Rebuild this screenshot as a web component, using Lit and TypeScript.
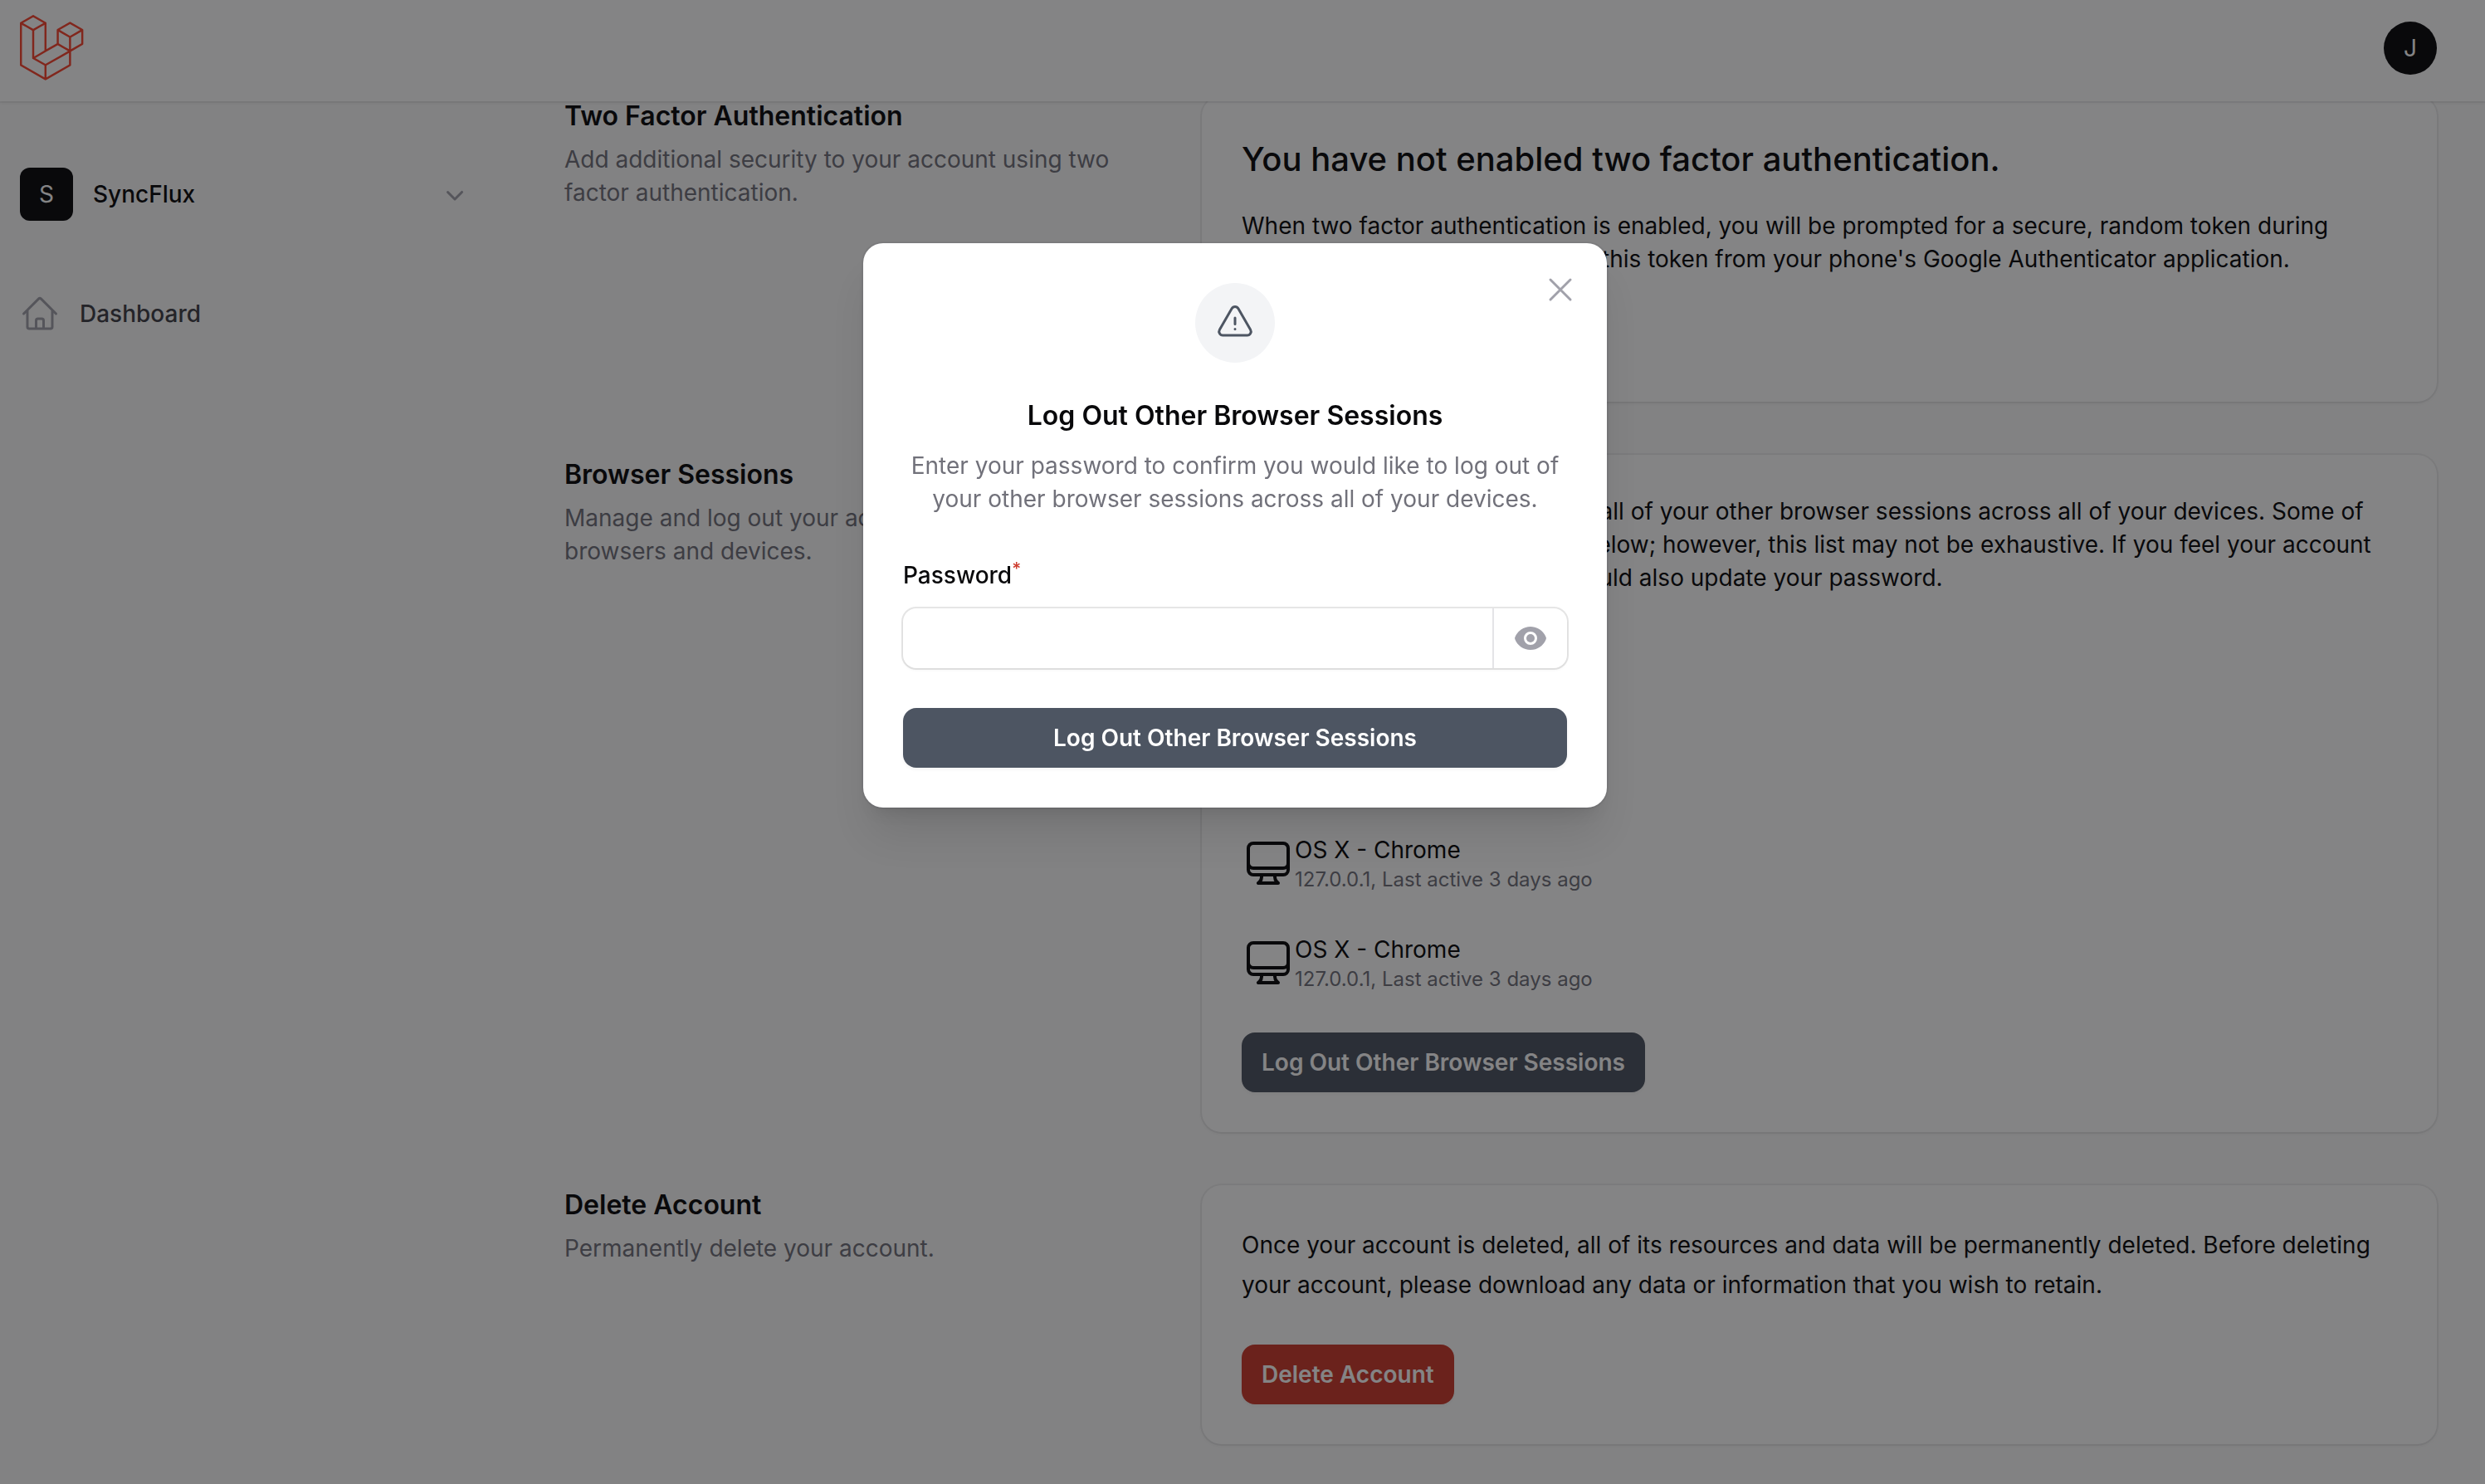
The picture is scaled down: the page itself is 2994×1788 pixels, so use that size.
import { LitElement, html, css, svg } from "lit";
import { customElement, property, state } from "lit/decorators.js";

interface Session {
  platform: string;
  detail: string;
}

const outlineIcons: Record<string, string> = {
  home: "m2.25 12 8.954-8.955c.44-.439 1.152-.439 1.591 0L21.75 12M4.5 9.75v10.125c0 .621.504 1.125 1.125 1.125H9.75v-4.875c0-.621.504-1.125 1.125-1.125h2.25c.621 0 1.125.504 1.125 1.125V21h4.125c.621 0 1.125-.504 1.125-1.125V9.75M8.25 21h8.25",
  desktop:
    "M9 17.25v1.007a3 3 0 0 1-.879 2.122L7.5 21h9l-.621-.621A3 3 0 0 1 15 18.257V17.25m6-12V15a2.25 2.25 0 0 1-2.25 2.25H5.25A2.25 2.25 0 0 1 3 15V5.25m18 0A2.25 2.25 0 0 0 18.75 3H5.25A2.25 2.25 0 0 0 3 5.25m18 0V12a2.25 2.25 0 0 1-2.25 2.25H5.25A2.25 2.25 0 0 1 3 12V5.25",
  warning:
    "M12 9v3.75m-9.303 3.376c-.866 1.5.217 3.374 1.948 3.374h14.71c1.73 0 2.813-1.874 1.948-3.374L13.949 3.378c-.866-1.5-3.032-1.5-3.898 0L2.697 16.126ZM12 15.75h.007v.008H12v-.008Z",
  close: "M6 18 18 6M6 6l12 12",
};

const solidIcons: Record<string, string[]> = {
  chevron: [
    "M5.22 8.22a.75.75 0 0 1 1.06 0L10 11.94l3.72-3.72a.75.75 0 1 1 1.06 1.06l-4.25 4.25a.75.75 0 0 1-1.06 0L5.22 9.28a.75.75 0 0 1 0-1.06Z",
  ],
  eye: [
    "M10 12.5a2.5 2.5 0 1 0 0-5 2.5 2.5 0 0 0 0 5Z",
    "M.664 10.59a1.651 1.651 0 0 1 0-1.186A10.004 10.004 0 0 1 10 3c4.257 0 7.893 2.66 9.336 6.41.147.381.146.804 0 1.186A10.004 10.004 0 0 1 10 17c-4.257 0-7.893-2.66-9.336-6.41ZM14 10a4 4 0 1 1-8 0 4 4 0 0 1 8 0Z",
  ],
};

@customElement("ui-icon")
export class UiIcon extends LitElement {
  static styles = css`
    :host {
      display: block;
      flex: none;
      width: 48px;
      height: 48px;
    }
    .icon {
      display: block;
      width: 100%;
      height: 100%;
    }
  `;

  @property() name = "";

  render() {
    const solid = solidIcons[this.name];
    if (solid) {
      return html`<svg class="icon" viewBox="0 0 20 20" fill="currentColor" aria-hidden="true">
        ${solid.map((d) => svg`<path fill-rule="evenodd" clip-rule="evenodd" d=${d} />`)}
      </svg>`;
    }
    return html`<svg
      class="icon"
      viewBox="0 0 24 24"
      fill="none"
      stroke="currentColor"
      stroke-width="1.5"
      stroke-linecap="round"
      stroke-linejoin="round"
      aria-hidden="true"
    >
      <path d=${outlineIcons[this.name] ?? ""} />
    </svg>`;
  }
}

@customElement("settings-section")
export class SettingsSection extends LitElement {
  static styles = css`
    :host {
      display: grid;
      grid-template-columns: repeat(3, minmax(0, 1fr));
      column-gap: 48px;
    }
    .intro {
      display: flex;
      flex-direction: column;
      gap: 8px;
    }
    .heading {
      margin: 0;
      font-size: 32px;
      line-height: 48px;
      font-weight: 600;
      color: #09090b;
    }
    .description {
      margin: 0;
      font-size: 28px;
      line-height: 40px;
      color: #71717a;
    }
    .card {
      grid-column: span 2;
      box-sizing: border-box;
      padding: 48px;
      border-radius: 24px;
      background: #fff;
      box-shadow:
        0 0 0 2px rgba(9, 9, 11, 0.05),
        0 2px 4px rgba(0, 0, 0, 0.05);
    }
  `;

  @property() heading = "";
  @property() description = "";

  render() {
    return html`
      <div class="intro">
        <h2 class="heading">${this.heading}</h2>
        <p class="description">${this.description}</p>
      </div>
      <div class="card"><slot></slot></div>
    `;
  }
}

@customElement("app-root")
export class AppRoot extends LitElement {
  static styles = css`
    :host {
      display: block;
      font-family: Inter, "Liberation Sans", sans-serif;
      font-size: 28px;
      line-height: 40px;
      color: #09090b;
    }
    button,
    input {
      font: inherit;
      color: inherit;
      margin: 0;
      padding: 0;
      border: 0;
      background: none;
    }
    button {
      cursor: pointer;
    }
    .page {
      display: flex;
      flex-direction: column;
      box-sizing: border-box;
      min-height: 100vh;
      background: #fafafa;
    }

    .topbar {
      position: sticky;
      top: 0;
      z-index: 1;
      display: flex;
      align-items: center;
      justify-content: space-between;
      padding: 18px 58px 24px 24px;
      background: #fff;
      box-shadow:
        0 0 0 2px rgba(9, 9, 11, 0.05),
        0 2px 4px rgba(0, 0, 0, 0.05);
    }
    .logo {
      display: block;
      height: 80px;
      width: auto;
    }
    .avatar {
      display: grid;
      place-items: center;
      flex: none;
      width: 64px;
      height: 64px;
      font-weight: 400;
      background: #09090b;
      color: #fff;
    }
    .avatar.round {
      border-radius: 50%;
    }
    .avatar.square {
      border-radius: 12px;
    }

    .body {
      display: grid;
      grid-template-columns: 616px minmax(0, 1fr);
    }
    .sidebar {
      display: flex;
      flex-direction: column;
      gap: 72px;
      padding: 80px 48px 48px 24px;
      font-weight: 500;
    }
    .tenant {
      display: flex;
      align-items: center;
      gap: 24px;
      text-align: left;
      font-weight: 500;
    }
    .tenant-name {
      flex: 1;
    }
    .chevron {
      width: 40px;
      height: 40px;
      color: #a1a1aa;
    }
    .nav-link {
      display: flex;
      align-items: center;
      gap: 24px;
      padding: 16px 0;
      color: #3f3f46;
      text-decoration: none;
    }
    .nav-icon {
      color: #a1a1aa;
    }

    .content {
      display: flex;
      flex-direction: column;
      gap: 64px;
      margin-top: -6px;
      padding: 0 58px 48px 64px;
    }
    .stack {
      display: flex;
      flex-direction: column;
      align-items: flex-start;
    }
    .stack.tight {
      gap: 32px;
    }
    .stack.loose {
      gap: 48px;
    }
    .title {
      margin: 0;
      font-size: 40px;
      line-height: 56px;
      font-weight: 500;
    }
    .text {
      margin: 0;
    }
    .text.airy {
      line-height: 48px;
    }
    .sessions {
      display: flex;
      flex-direction: column;
      gap: 48px;
      margin: 0;
      padding: 0;
      list-style: none;
    }
    .session {
      display: flex;
      align-items: center;
    }
    .device {
      width: 64px;
      height: 64px;
    }
    .session-detail {
      font-size: 24px;
      line-height: 32px;
      color: #71717a;
    }
    .btn {
      padding: 16px 24px;
      border-radius: 16px;
      font-weight: 600;
      color: #fff;
      background: #4d5562;
      box-shadow: 0 2px 4px rgba(0, 0, 0, 0.05);
    }
    .btn.danger {
      background: #cd3b2d;
    }

    .overlay {
      position: fixed;
      inset: 0;
      z-index: 2;
      display: grid;
      grid-template-rows: 1fr auto 3fr;
      justify-items: center;
      box-sizing: border-box;
      padding: 32px 18px 32px 0;
      background: rgba(9, 9, 11, 0.5);
    }
    .modal {
      grid-row: 2;
      position: relative;
      display: flex;
      flex-direction: column;
      gap: 48px;
      box-sizing: border-box;
      width: 100%;
      max-width: 896px;
      padding: 48px;
      border-radius: 24px;
      background: #fff;
      box-shadow:
        0 0 0 2px rgba(9, 9, 11, 0.05),
        0 40px 50px -10px rgba(0, 0, 0, 0.1),
        0 16px 20px -12px rgba(0, 0, 0, 0.1);
    }
    .close {
      position: absolute;
      top: 32px;
      right: 32px;
      color: #a1a1aa;
    }
    .modal-head {
      display: flex;
      flex-direction: column;
      align-items: center;
      text-align: center;
    }
    .badge {
      display: grid;
      place-items: center;
      width: 96px;
      height: 96px;
      margin-bottom: 40px;
      border-radius: 50%;
      background: #f3f4f6;
      color: #4d5562;
    }
    .modal-title {
      margin: 0 0 16px;
      font-size: 32px;
      line-height: 48px;
      font-weight: 600;
    }
    .muted {
      margin: 0;
      color: #71717a;
    }
    .field {
      display: flex;
      flex-direction: column;
      gap: 16px;
    }
    .label {
      line-height: 48px;
      font-weight: 500;
    }
    .required {
      font-size: 21px;
      line-height: 0;
      color: #cd3b2d;
    }
    .input-group {
      display: flex;
      height: 72px;
      border-radius: 16px;
      box-shadow:
        0 0 0 2px rgba(9, 9, 11, 0.1),
        0 2px 4px rgba(0, 0, 0, 0.05);
    }
    .input {
      flex: 1;
      min-width: 0;
      padding: 0 24px;
      border-radius: 16px 0 0 16px;
      outline: none;
    }
    .reveal {
      display: grid;
      place-items: center;
      padding: 0 24px;
      border-left: 2px solid #e4e4e7;
      color: #a1a1aa;
    }
    .eye {
      width: 40px;
      height: 40px;
    }
  `;

  @state() private open = true;
  @state() private revealed = false;

  private sessions: Session[] = [
    { platform: "OS X - Chrome", detail: "127.0.0.1, This device" },
    { platform: "OS X - Chrome", detail: "127.0.0.1, Last active 1 day ago" },
    { platform: "OS X - Chrome", detail: "127.0.0.1, Last active 3 days ago" },
    { platform: "OS X - Chrome", detail: "127.0.0.1, Last active 3 days ago" },
  ];

  private renderTopbar() {
    return html`
      <header class="topbar">
        <a href="#" aria-label="Home">
          <svg class="logo" viewBox="0 0 50 52" aria-hidden="true">
            <path
              fill="#f8452f"
              d="M49.626 11.564a.809.809 0 0 1 .028.209v10.972a.8.8 0 0 1-.402.694l-9.209 5.302V39.25c0 .286-.152.55-.4.694L20.42 51.01c-.044.025-.092.041-.14.058-.018.006-.035.017-.054.022a.805.805 0 0 1-.41 0c-.022-.006-.042-.018-.063-.026-.044-.016-.09-.03-.132-.054L.402 39.944A.801.801 0 0 1 0 39.25V6.334c0-.072.01-.142.028-.21.006-.023.02-.044.028-.067.015-.042.029-.085.051-.124.015-.026.037-.047.055-.071.023-.032.044-.065.071-.093.023-.023.053-.04.079-.06.029-.024.055-.05.088-.069h.001l9.61-5.533a.802.802 0 0 1 .8 0l9.61 5.533h.002c.032.02.059.045.088.068.026.02.055.038.078.06.028.029.048.062.072.094.017.024.04.045.054.071.023.04.036.082.052.124.008.023.022.044.028.068a.809.809 0 0 1 .028.209v20.559l8.008-4.611v-10.51c0-.07.01-.141.028-.208.007-.024.02-.045.028-.068.016-.042.03-.085.052-.124.015-.026.037-.047.054-.071.024-.032.044-.065.072-.093.023-.023.052-.04.078-.06.03-.024.056-.05.088-.069h.001l9.611-5.533a.801.801 0 0 1 .8 0l9.61 5.533c.034.02.06.045.09.068.025.02.054.038.077.06.028.029.048.062.072.094.018.024.04.045.054.071.023.039.036.082.052.124.009.023.022.044.028.068zm-1.574 10.718v-9.124l-3.363 1.936-4.646 2.675v9.124l8.01-4.611zm-9.61 16.505v-9.13l-4.57 2.61-13.05 7.448v9.216l17.62-10.144zM1.602 7.719v31.068L19.22 48.93v-9.214l-9.204-5.209-.003-.002-.004-.002c-.031-.018-.057-.044-.086-.066-.025-.02-.054-.036-.076-.058l-.002-.003c-.026-.025-.044-.056-.066-.084-.02-.027-.044-.05-.06-.078l-.001-.003c-.018-.03-.029-.066-.042-.1-.013-.03-.03-.058-.038-.09v-.001c-.01-.038-.012-.078-.016-.117-.004-.03-.012-.06-.012-.09v-.002-21.481L4.965 9.654 1.602 7.72zm8.81-5.994L2.405 6.334l8.005 4.609 8.006-4.61-8.006-4.608zm4.164 28.764l4.645-2.674V7.719l-3.363 1.936-4.646 2.675v20.096l3.364-1.937zM39.243 7.164l-8.006 4.609 8.006 4.609 8.005-4.61-8.005-4.608zm-.801 10.605l-4.646-2.675-3.363-1.936v9.124l4.645 2.674 3.364 1.937v-9.124zM20.02 38.33l11.743-6.704 5.87-3.35-8-4.606-9.211 5.303-8.395 4.833 7.993 4.524z"
            />
          </svg>
        </a>
        <button class="avatar round" type="button" aria-label="User menu">J</button>
      </header>
    `;
  }

  private renderSidebar() {
    return html`
      <nav class="sidebar">
        <button class="tenant" type="button">
          <span class="avatar square">S</span>
          <span class="tenant-name">SyncFlux</span>
          <ui-icon class="chevron" name="chevron"></ui-icon>
        </button>
        <a class="nav-link" href="#dashboard">
          <ui-icon class="nav-icon" name="home"></ui-icon>
          <span>Dashboard</span>
        </a>
      </nav>
    `;
  }

  private renderModal() {
    return html`
      <div class="overlay">
        <form
          class="modal"
          role="dialog"
          aria-modal="true"
          aria-labelledby="modal-title"
          @submit=${(e: Event) => e.preventDefault()}
        >
          <button class="close" type="button" aria-label="Close" @click=${() => (this.open = false)}>
            <ui-icon name="close"></ui-icon>
          </button>
          <div class="modal-head">
            <div class="badge"><ui-icon name="warning"></ui-icon></div>
            <h2 class="modal-title" id="modal-title">Log Out Other Browser Sessions</h2>
            <p class="muted">
              Enter your password to confirm you would like to log out of your other browser
              sessions across all of your devices.
            </p>
          </div>
          <div class="field">
            <label class="label" for="password">Password<sup class="required">*</sup></label>
            <div class="input-group">
              <input
                class="input"
                id="password"
                type=${this.revealed ? "text" : "password"}
                autocomplete="current-password"
                required
              />
              <button
                class="reveal"
                type="button"
                aria-label="Show password"
                @click=${() => (this.revealed = !this.revealed)}
              >
                <ui-icon class="eye" name="eye"></ui-icon>
              </button>
            </div>
          </div>
          <button class="btn" type="submit">Log Out Other Browser Sessions</button>
        </form>
      </div>
    `;
  }

  render() {
    return html`
      <div class="page">
        ${this.renderTopbar()}
        <div class="body">
          ${this.renderSidebar()}
          <main class="content">
            <settings-section
              heading="Two Factor Authentication"
              description="Add additional security to your account using two factor authentication."
            >
              <div class="stack tight">
                <h3 class="title">You have not enabled two factor authentication.</h3>
                <p class="text">
                  When two factor authentication is enabled, you will be prompted for a secure,
                  random token during authentication. You may retrieve this token from your
                  phone's Google Authenticator application.
                </p>
                <button class="btn" type="button">Enable</button>
              </div>
            </settings-section>
            <settings-section
              heading="Browser Sessions"
              description="Manage and log out your active sessions on other browsers and devices."
            >
              <div class="stack loose">
                <p class="text">
                  If necessary, you may log out of all of your other browser sessions across all
                  of your devices. Some of your recent sessions are listed below; however, this
                  list may not be exhaustive. If you feel your account has been compromised, you
                  should also update your password.
                </p>
                <ul class="sessions">
                  ${this.sessions.map(
                    (s) => html`
                      <li class="session">
                        <ui-icon class="device" name="desktop"></ui-icon>
                        <div>
                          <div>${s.platform}</div>
                          <div class="session-detail">${s.detail}</div>
                        </div>
                      </li>
                    `,
                  )}
                </ul>
                <button class="btn" type="button" @click=${() => (this.open = true)}>
                  Log Out Other Browser Sessions
                </button>
              </div>
            </settings-section>
            <settings-section
              heading="Delete Account"
              description="Permanently delete your account."
            >
              <div class="stack loose">
                <p class="text airy">
                  Once your account is deleted, all of its resources and data will be permanently
                  deleted. Before deleting your account, please download any data or information
                  that you wish to retain.
                </p>
                <button class="btn danger" type="button">Delete Account</button>
              </div>
            </settings-section>
          </main>
        </div>
        ${this.open ? this.renderModal() : null}
      </div>
    `;
  }
}
